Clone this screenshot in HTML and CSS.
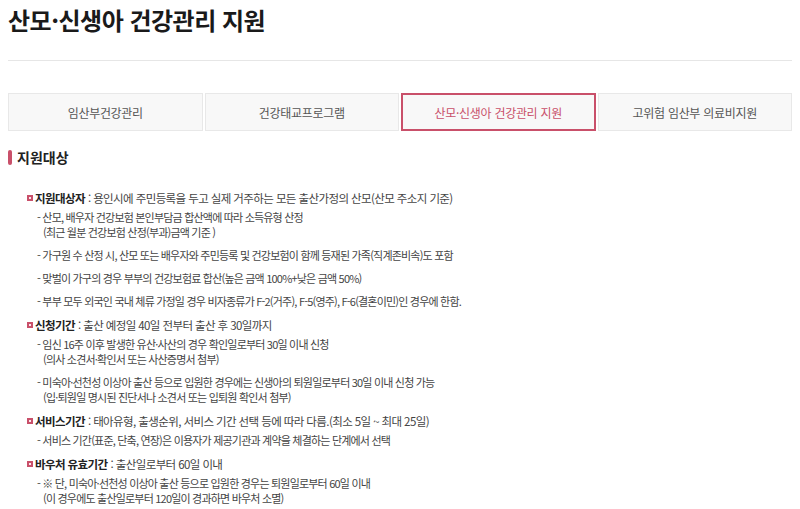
FILE: index.html
```html
<!DOCTYPE html>
<html lang="ko">
<head>
<meta charset="utf-8">
<link rel="stylesheet" href="styles.css">
</head>
<body>
<div class="page">
  <h1 class="title">산모·신생아 건강관리 지원</h1>
  <div class="rule"></div>
  <ul class="tabs">
    <li class="tab">임산부건강관리</li>
    <li class="tab">건강태교프로그램</li>
    <li class="tab active">산모·신생아 건강관리 지원</li>
    <li class="tab">고위험 임산부 의료비지원</li>
  </ul>
  <h2 class="sec">지원대상</h2>
  <div class="list">
    <div class="item">
      <p class="head"><span class="sq"></span><b>지원대상자</b> : 용인시에 주민등록을 두고 실제 거주하는 모든 출산가정의 산모(산모 주소지 기준)</p>
      <p class="sub">- 산모, 배우자 건강보험 본인부담금 합산액에 따라 소득유형 산정<br>(최근 월분 건강보험 산정(부과)금액 기준 )</p>
      <p class="sub">- 가구원 수 산정 시, 산모 또는 배우자와 주민등록 및 건강보험이 함께 등재된 가족(직계존비속)도 포함</p>
      <p class="sub">- 맞벌이 가구의 경우 부부의 건강보험료 합산(높은 금액 100%+낮은 금액 50%)</p>
      <p class="sub">- 부부 모두 외국인 국내 체류 가정일 경우 비자종류가 F-2(거주), F-5(영주), F-6(결혼이민)인 경우에 한함.</p>
    </div>
    <div class="item">
      <p class="head"><span class="sq"></span><b>신청기간</b> : 출산 예정일 40일 전부터 출산 후 30일까지</p>
      <p class="sub">- 임신 16주 이후 발생한 유산·사산의 경우 확인일로부터 30일 이내 신청<br>(의사 소견서·확인서 또는 사산증명서 첨부)</p>
      <p class="sub">- 미숙아·선천성 이상아 출산 등으로 입원한 경우에는 신생아의 퇴원일로부터 30일 이내 신청 가능<br>(입·퇴원일 명시된 진단서나 소견서 또는 입퇴원 확인서 첨부)</p>
    </div>
    <div class="item">
      <p class="head"><span class="sq"></span><b>서비스기간</b> : 태아유형, 출생순위, 서비스 기간 선택 등에 따라 다름.(최소 5일 ~ 최대 25일)</p>
      <p class="sub">- 서비스 기간(표준, 단축, 연장)은 이용자가 제공기관과 계약을 체결하는 단계에서 선택</p>
    </div>
    <div class="item">
      <p class="head"><span class="sq"></span><b>바우처 유효기간</b> : 출산일로부터 60일 이내</p>
      <p class="sub">- ※ 단, 미숙아·선천성 이상아 출산 등으로 입원한 경우는 퇴원일로부터 60일 이내<br>(이 경우에도 출산일로부터 120일이 경과하면 바우처 소멸)</p>
    </div>
  </div>
</div>
</body>
</html>
```

FILE: styles.css
```css
* { box-sizing: border-box; }
body {
  margin: 0;
  background: #fff;
  font-family: "Noto Sans CJK KR", "Noto Sans", sans-serif;
  color: #444;
}
.page { padding: 0 8px; }
.title {
  margin: 0;
  padding-top: 4px;
  font-size: 24px;
  line-height: 32px;
  font-weight: 700;
  color: #1a1a1a;
  letter-spacing: -0.5px;
}
.rule {
  margin-top: 24px;
  border-top: 1px solid #e6e6e6;
}
.tabs {
  list-style: none;
  margin: 32px 0 0;
  padding: 0;
  display: grid;
  grid-template-columns: repeat(4, 1fr);
  gap: 2px;
}
.tab {
  height: 38px;
  display: flex;
  align-items: center;
  justify-content: center;
  background: #f8f8f8;
  border: 1px solid #e8e8e8;
  font-size: 12px;
  color: #555;
  letter-spacing: -0.3px;
}
.tab.active {
  border: 2px solid #c9506a;
  color: #c9506a;
}
.sec {
  margin: 18px 0 0;
  font-size: 14px;
  line-height: 16px;
  font-weight: 700;
  color: #222;
  display: flex;
  align-items: center;
  gap: 5px;
}
.sec::before {
  content: "";
  width: 4px;
  height: 15px;
  border-radius: 2px;
  background: #c9506a;
}
.list { margin-top: 24px; }
.item { margin-top: 7px; }
.item:first-child { margin-top: 0; }
.head {
  margin: 0 0 3px;
  padding-left: 19px;
  font-size: 11.5px;
  line-height: 18px;
  color: #444;
  letter-spacing: -0.6px;
  display: flex;
  align-items: center;
}
.head b { color: #222; font-weight: 700; margin-right: 3px; }
.sq {
  width: 6px;
  height: 6px;
  border: 2px solid #c9506a;
  background: #fde7ec;
  margin-right: 2px;
  flex: none;
}
.sub {
  margin: 0 0 8px;
  padding-left: 35px;
  text-indent: -6px;
  font-size: 11px;
  line-height: 15px;
  color: #444;
  letter-spacing: -0.8px;
}
.item .sub:last-child { margin-bottom: 0; }
```
